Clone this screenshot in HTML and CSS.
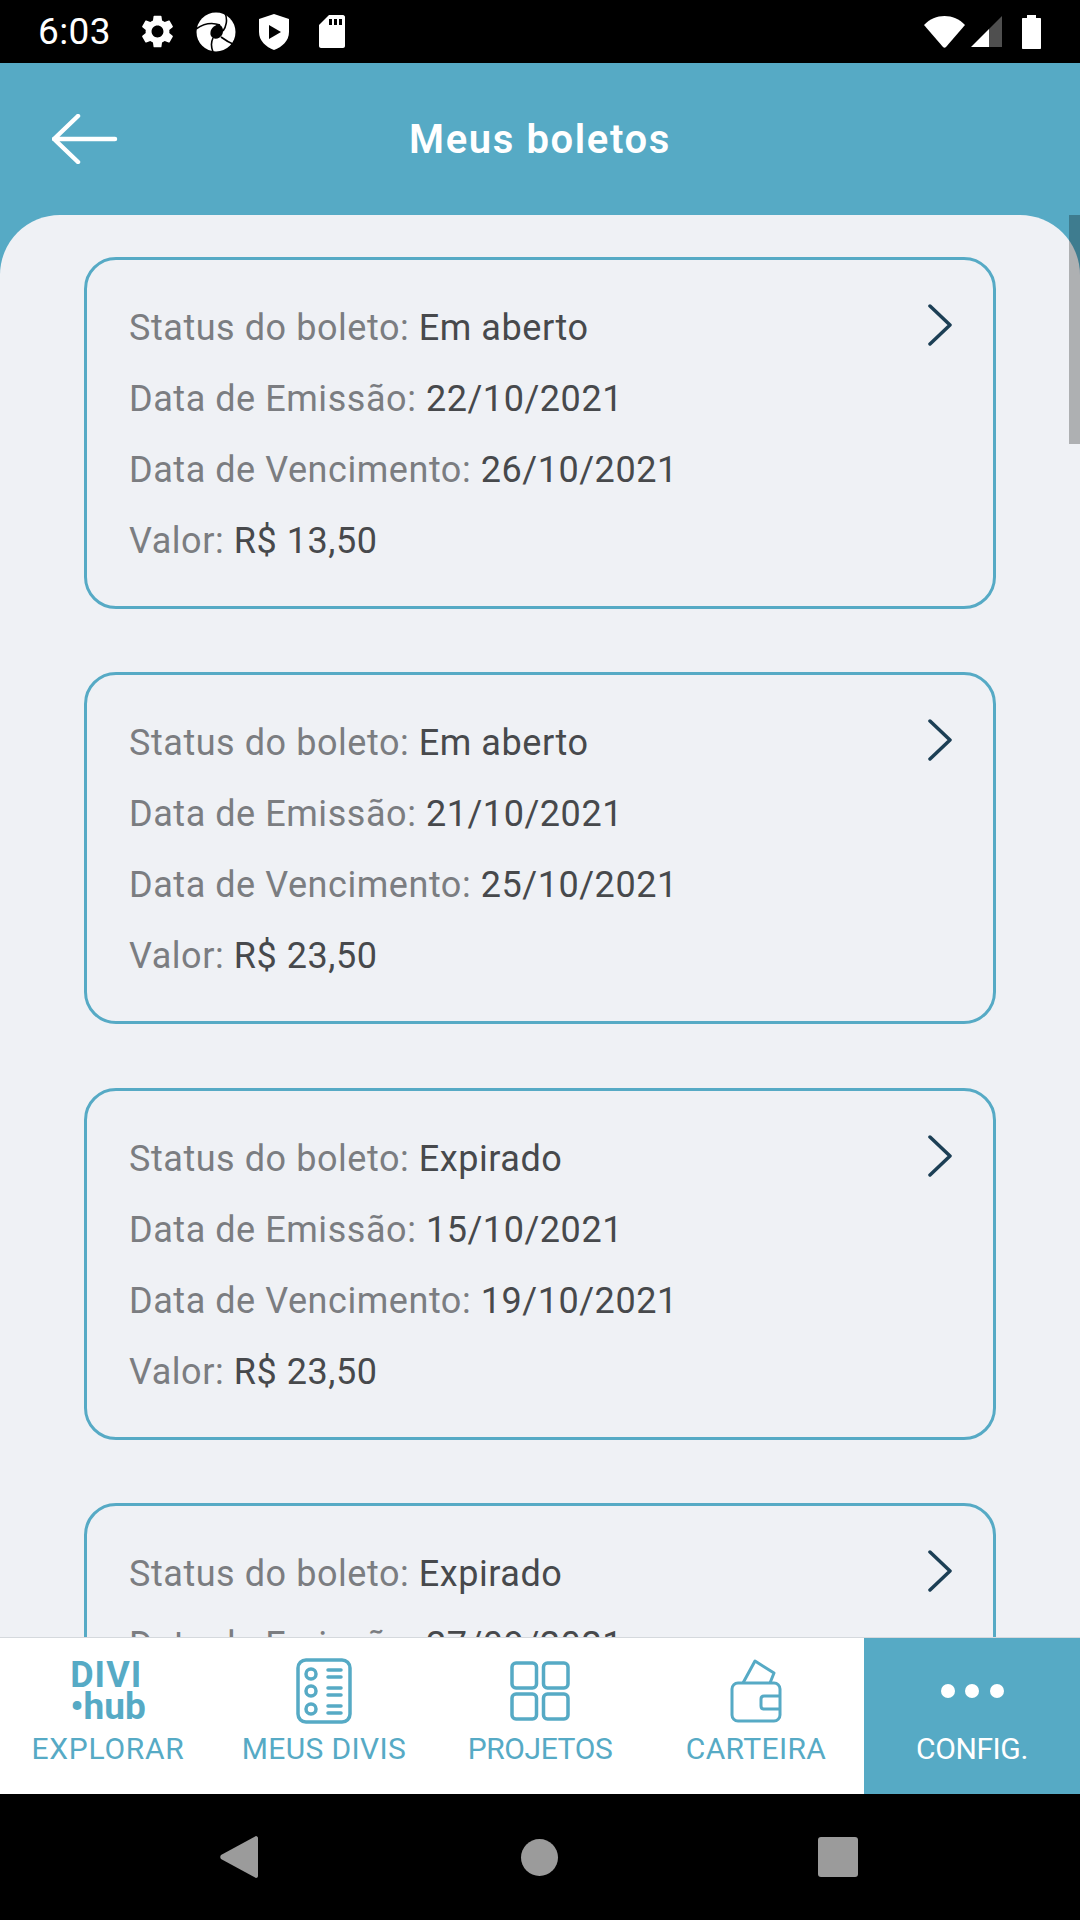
FILE: index.html
```html
<!DOCTYPE html>
<html lang="pt-BR">
<head>
  <meta charset="UTF-8">
  <title>Meus boletos</title>
  <link rel="stylesheet" href="styles.css">
</head>
<body>
  <div class="app">
    <div class="status-bar">
      <span class="clock">6:03</span>
      <svg class="st-gear" viewBox="2 2 20 20" width="33" height="33"><path fill="#fff" d="M19.14 12.94c.04-.3.06-.61.06-.94 0-.32-.02-.64-.07-.94l2.03-1.58c.18-.14.23-.41.12-.61l-1.92-3.32c-.12-.22-.37-.29-.59-.22l-2.39.96c-.5-.38-1.03-.7-1.62-.94l-.36-2.54c-.04-.24-.24-.41-.48-.41h-3.84c-.24 0-.43.17-.47.41l-.36 2.54c-.59.24-1.13.57-1.62.94l-2.39-.96c-.22-.08-.47 0-.59.22L2.74 8.87c-.12.21-.08.47.12.61l2.03 1.58c-.05.3-.09.63-.09.94s.02.64.07.94l-2.03 1.58c-.18.14-.23.41-.12.61l1.92 3.32c.12.22.37.29.59.22l2.39-.96c.5.38 1.03.7 1.62.94l.36 2.54c.05.24.24.41.48.41h3.84c.24 0 .44-.17.47-.41l.36-2.54c.59-.24 1.13-.56 1.62-.94l2.39.96c.22.08.47 0 .59-.22l1.92-3.32c.12-.22.07-.47-.12-.61l-2.01-1.58zM12 15.6c-1.98 0-3.6-1.62-3.6-3.6s1.62-3.6 3.6-3.6 3.6 1.62 3.6 3.6-1.62 3.6-3.6 3.6z"/></svg>
      <svg class="st-swirl" viewBox="0 0 40 40" width="40" height="40">
        <circle cx="20" cy="20" r="19.5" fill="#fff"/>
        <path fill="#000" d="M15 18 C17 14 21 12 24 13 C27 15 28 19 26 23 C24 26 20 28 17 26 C14 24 14 21 15 18 Z"/>
        <path fill="none" stroke="#000" stroke-width="1.6" d="M0 17 C7 12 16 10 24 13 M29 1 C32 8 30 15 27 19 M39 33 C34 31 29 28 25 25 M17 40 C15 35 15 30 17 26"/>
      </svg>
      <svg class="st-shield" viewBox="0 0 30 36" width="30" height="36">
        <path fill="#fff" d="M15 0 L30 5 V18 C30 27 23 33 15 36 C7 33 0 27 0 18 V5 Z"/>
        <path fill="#000" d="M10 11 L22 18 L10 25 Z"/>
      </svg>
      <svg class="st-sd" viewBox="0 0 26 33" width="26" height="33">
        <path fill="#fff" d="M10 0 H24 C25 0 26 1 26 2 V31 C26 32 25 33 24 33 H2 C1 33 0 32 0 31 V10 Z"/>
        <path fill="#000" d="M10 4 H13 V10 H10 Z M15 4 H18 V10 H15 Z M20 4 H23 V10 H20 Z"/>
      </svg>
      <span class="status-right">
        <svg viewBox="0 0 41 32" width="41" height="32"><path fill="#fff" d="M0 9 C11 -3 30 -3 41 9 L22 31 C21 32 20 32 19 31 Z"/></svg>
        <svg class="st-signal" viewBox="0 0 31 31" width="31" height="31">
          <path fill="#4f4f4f" d="M18 13 L31 0 V31 H18 Z"/>
          <path fill="#fff" d="M18 13 V31 H0 Z"/>
        </svg>
        <svg class="st-battery" viewBox="0 0 19 34" width="19" height="34"><path fill="#fff" d="M5 0 H14 V3 H18 C18.600 3 19 3.400 19 4 V33 C19 33.600 18.600 34 18 34 H1 C.4 34 0 33.600 0 33 V4 C0 3.400 .4 3 1 3 H5 Z"/></svg>
      </span>
    </div>

    <header class="top-bar">
      <svg class="back-arrow" viewBox="0 0 66 50" width="66" height="50"><path fill="none" stroke="#fff" stroke-width="4.500" stroke-linecap="round" stroke-linejoin="round" d="M26 2 L2 25 L26 48 M2 25 H63"/></svg>
      <h1 class="title">Meus boletos</h1>
    </header>

    <main class="content">
      <div class="sheet">
        <div class="card">
          <div class="rows">
            <p class="row"><span class="label">Status do boleto:</span> <span class="value">Em aberto</span></p>
            <p class="row"><span class="label">Data de Emissão:</span> <span class="value">22/10/2021</span></p>
            <p class="row"><span class="label">Data de Vencimento:</span> <span class="value">26/10/2021</span></p>
            <p class="row"><span class="label">Valor:</span> <span class="value">R$ 13,50</span></p>
          </div>
          <svg class="chevron" viewBox="0 0 24 42" width="24" height="42"><path fill="none" stroke="#1c3f55" stroke-width="3.500" stroke-linecap="round" stroke-linejoin="round" d="M2 2 L22 21 L2 40"/></svg>
        </div>
        <div class="card">
          <div class="rows">
            <p class="row"><span class="label">Status do boleto:</span> <span class="value">Em aberto</span></p>
            <p class="row"><span class="label">Data de Emissão:</span> <span class="value">21/10/2021</span></p>
            <p class="row"><span class="label">Data de Vencimento:</span> <span class="value">25/10/2021</span></p>
            <p class="row"><span class="label">Valor:</span> <span class="value">R$ 23,50</span></p>
          </div>
          <svg class="chevron" viewBox="0 0 24 42" width="24" height="42"><path fill="none" stroke="#1c3f55" stroke-width="3.500" stroke-linecap="round" stroke-linejoin="round" d="M2 2 L22 21 L2 40"/></svg>
        </div>
        <div class="card">
          <div class="rows">
            <p class="row"><span class="label">Status do boleto:</span> <span class="value">Expirado</span></p>
            <p class="row"><span class="label">Data de Emissão:</span> <span class="value">15/10/2021</span></p>
            <p class="row"><span class="label">Data de Vencimento:</span> <span class="value">19/10/2021</span></p>
            <p class="row"><span class="label">Valor:</span> <span class="value">R$ 23,50</span></p>
          </div>
          <svg class="chevron" viewBox="0 0 24 42" width="24" height="42"><path fill="none" stroke="#1c3f55" stroke-width="3.500" stroke-linecap="round" stroke-linejoin="round" d="M2 2 L22 21 L2 40"/></svg>
        </div>
        <div class="card">
          <div class="rows">
            <p class="row"><span class="label">Status do boleto:</span> <span class="value">Expirado</span></p>
            <p class="row"><span class="label">Data de Emissão:</span> <span class="value">27/09/2021</span></p>
          </div>
          <svg class="chevron" viewBox="0 0 24 42" width="24" height="42"><path fill="none" stroke="#1c3f55" stroke-width="3.500" stroke-linecap="round" stroke-linejoin="round" d="M2 2 L22 21 L2 40"/></svg>
        </div>
      </div>
      <div class="scrollbar"></div>
    </main>

    <nav class="tabs">
      <a class="tab">
        <span class="tab-icon">
          <span class="logo"><span class="logo-top">DIVI</span><span class="logo-bottom">•hub</span></span>
        </span>
        <span class="tab-label tab-label-wide">EXPLORAR</span>
      </a>
      <a class="tab">
        <span class="tab-icon">
          <svg viewBox="0 0 56 66" width="56" height="66" fill="none" stroke="#56aac5" stroke-width="3.500" stroke-linecap="round">
            <rect x="2" y="2" width="52" height="62" rx="8"/>
            <circle cx="15" cy="16" r="5"/><circle cx="15" cy="33" r="5"/><circle cx="15" cy="51" r="5"/>
            <path d="M32 12 H45 M32 19 H45 M32 30 H45 M32 37 H45 M32 48 H45 M32 55 H45"/>
          </svg>
        </span>
        <span class="tab-label">MEUS DIVIS</span>
      </a>
      <a class="tab">
        <span class="tab-icon">
          <svg viewBox="0 0 60 60" width="60" height="60" fill="none" stroke="#56aac5" stroke-width="3.500">
            <rect x="2" y="2" width="24.500" height="25" rx="4"/>
            <rect x="33.500" y="2" width="24.500" height="25" rx="4"/>
            <rect x="2" y="33" width="24.500" height="25" rx="4"/>
            <rect x="33.500" y="33" width="24.500" height="25" rx="4"/>
          </svg>
        </span>
        <span class="tab-label tab-label-tight">PROJETOS</span>
      </a>
      <a class="tab">
        <span class="tab-icon">
          <svg viewBox="0 0 52 64" width="52" height="64" fill="none" stroke="#56aac5" stroke-width="3" stroke-linejoin="round">
            <path d="M13 24 L25 2 L44 14 L40 24"/>
            <rect x="2" y="24" width="48" height="38" rx="6"/>
            <path d="M50 37 H34 C32 37 31 38 31 40 V47 C31 49 32 50 34 50 H50"/>
          </svg>
        </span>
        <span class="tab-label">CARTEIRA</span>
      </a>
      <a class="tab tab-active">
        <span class="tab-icon">
          <span class="dots"><i></i><i></i><i></i></span>
        </span>
        <span class="tab-label tab-label-tight">CONFIG.</span>
      </a>
    </nav>

    <div class="system-nav">
      <svg viewBox="0 0 38 42" width="38" height="42"><path fill="#9b9b9b" d="M36 0 C37 0 38 1 38 2 V40 C38 41 37 42 36 42 L1 23 C0 22 0 20 1 19 Z"/></svg>
      <span class="home-btn"></span>
      <span class="recent-btn"></span>
    </div>
  </div>
</body>
</html>
```

FILE: styles.css
```css
* {
  box-sizing: border-box;
}
body {
  margin: 0;
  font-family: Roboto, "Noto Sans", sans-serif;
  background: #000;
}
p, h1 {
  margin: 0;
}
.app {
  width: 1080px;
  height: 1920px;
  display: flex;
  flex-direction: column;
  overflow: hidden;
}

/* status bar */
.status-bar {
  height: 63px;
  flex: none;
  background: #000;
  display: flex;
  align-items: center;
  padding-left: 38px;
  color: #fff;
}
.clock {
  width: 71px;
  font-size: 37px;
  letter-spacing: .4px;
}
.st-gear {
  margin-left: 32px;
}
.st-swirl {
  margin-left: 22px;
}
.st-shield {
  margin-left: 23px;
}
.st-sd {
  margin-left: 30px;
}
.status-right {
  margin-left: auto;
  margin-right: 39px;
  display: flex;
  align-items: center;
}
.st-signal {
  margin-left: 6px;
}
.st-battery {
  margin-left: 20px;
}

/* header */
.top-bar {
  height: 152px;
  flex: none;
  background: #56aac5;
  display: grid;
  grid-template-columns: 1fr auto 1fr;
  align-items: center;
}
.back-arrow {
  margin-left: 52px;
}
.title {
  color: #fff;
  font-size: 40px;
  font-weight: 600;
  letter-spacing: 1.600px;
}

/* list */
.content {
  flex: 1;
  min-height: 0;
  position: relative;
  background: #56aac5;
  overflow: hidden;
}
.sheet {
  height: 100%;
  background: #eff1f5;
  border-radius: 60px 60px 0 0;
  padding: 42px 84px 0;
  display: flex;
  flex-direction: column;
  gap: 63.300px;
}
.card {
  flex: none;
  height: 352px;
  border: 3px solid #56aac5;
  border-radius: 32px;
  padding: 33px 41px 0 42px;
  display: flex;
  justify-content: space-between;
  align-items: flex-start;
}
.row {
  font-size: 36px;
  line-height: 71px;
  letter-spacing: .55px;
  white-space: nowrap;
}
.label {
  color: #7b7d81;
}
.value {
  color: #47494c;
}
.chevron {
  margin-top: 11px;
}
.scrollbar {
  position: absolute;
  top: 0;
  right: 0;
  width: 11px;
  height: 229px;
  background: rgba(0, 0, 0, .27);
}

/* bottom tabs */
.tabs {
  height: 157px;
  flex: none;
  background: #fff;
  border-top: 1px solid #d5d9dd;
  display: grid;
  grid-template-columns: repeat(5, 216px);
}
.tab {
  display: flex;
  flex-direction: column;
  align-items: center;
  padding-top: 20px;
  color: #56aac5;
}
.tab-active {
  background: #56aac5;
  color: #fff;
}
.tab-icon {
  height: 66px;
  display: flex;
  align-items: center;
  justify-content: center;
}
.tab-label {
  margin-top: 8px;
  font-size: 30px;
  line-height: 34px;
  letter-spacing: .35px;
  white-space: nowrap;
}
.tab-label-wide {
  letter-spacing: .75px;
}
.tab-label-tight {
  letter-spacing: -.4px;
}
.logo {
  display: flex;
  flex-direction: column;
  font-weight: 700;
  color: #56aac5;
}
.logo-top {
  font-size: 36px;
  line-height: 32px;
  letter-spacing: 1px;
}
.logo-bottom {
  font-size: 37px;
  line-height: 32px;
}
.dots {
  display: flex;
  gap: 10.500px;
}
.dots i {
  width: 14px;
  height: 14px;
  border-radius: 50%;
  background: #fff;
}

/* android nav */
.system-nav {
  height: 126px;
  flex: none;
  background: #000;
  display: grid;
  grid-template-columns: 38px 37px 40px;
  justify-content: center;
  column-gap: 263px;
  align-items: center;
}
.home-btn {
  width: 37px;
  height: 37px;
  border-radius: 50%;
  background: #9b9b9b;
}
.recent-btn {
  width: 40px;
  height: 40px;
  margin-left: -3px;
  border-radius: 3px;
  background: #9b9b9b;
}
```
